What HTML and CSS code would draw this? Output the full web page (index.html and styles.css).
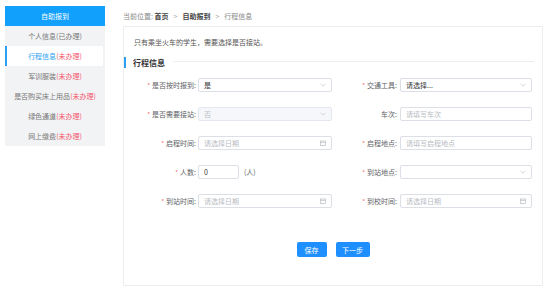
FILE: index.html
```html
<!DOCTYPE html>
<html lang="zh-CN">
<head>
    <meta charset="UTF-8">
    <meta name="viewport" content="width=device-width, initial-scale=1.0">
    <title>行程信息</title>
    <link rel="stylesheet" href="styles.css">
</head>
<body>
    <div class="layout">
        <div class="sidebar">
            <div class="sidebar-title">自助报到</div>
            <div class="menu-item">个人信息(已办理)</div>
            <div class="menu-item active">行程信息<span class="todo">(未办理)</span></div>
            <div class="menu-item">军训服装<span class="todo">(未办理)</span></div>
            <div class="menu-item">是否购买床上用品<span class="todo">(未办理)</span></div>
            <div class="menu-item">绿色通道<span class="todo">(未办理)</span></div>
            <div class="menu-item">网上缴费<span class="todo">(未办理)</span></div>
        </div>

        <div class="main">
            <div class="breadcrumb">
                当前位置: <b>首页</b><span class="sep">&gt;</span><b>自助报到</b><span class="sep">&gt;</span>行程信息
            </div>

            <div class="panel">
                <div class="notice">只有乘坐火车的学生，需要选择是否接站。</div>

                <div class="section-title">
                    <span>行程信息</span>
                    <div class="section-line"></div>
                </div>

                <div class="form-grid">
                    <div class="field">
                        <label class="label"><i>*</i>是否按时报到:</label>
                        <div class="control">
                            <span class="value">是</span>
                            <svg class="icon" viewBox="0 0 10 10"><path d="M2 3.5 L5 6.5 L8 3.5" fill="none" stroke="#c0c4cc" stroke-width="0.9"/></svg>
                        </div>
                    </div>
                    <div class="field right">
                        <label class="label"><i>*</i>交通工具:</label>
                        <div class="control">
                            <span class="value">请选择...</span>
                            <svg class="icon" viewBox="0 0 10 10"><path d="M2 3.5 L5 6.5 L8 3.5" fill="none" stroke="#c0c4cc" stroke-width="0.9"/></svg>
                        </div>
                    </div>

                    <div class="field">
                        <label class="label"><i>*</i>是否需要接站:</label>
                        <div class="control disabled">
                            <span class="placeholder">否</span>
                            <svg class="icon" viewBox="0 0 10 10"><path d="M2 3.5 L5 6.5 L8 3.5" fill="none" stroke="#c0c4cc" stroke-width="0.9"/></svg>
                        </div>
                    </div>
                    <div class="field right">
                        <label class="label">车次:</label>
                        <div class="control">
                            <span class="placeholder">请填写车次</span>
                        </div>
                    </div>

                    <div class="field">
                        <label class="label"><i>*</i>启程时间:</label>
                        <div class="control">
                            <span class="placeholder">请选择日期</span>
                            <svg class="icon" viewBox="0 0 10 10"><rect x="2" y="2.5" width="6" height="5.5" fill="none" stroke="#b0b4bc" stroke-width="0.8"/><path d="M2 4.2 H8" stroke="#b0b4bc" stroke-width="0.8"/></svg>
                        </div>
                    </div>
                    <div class="field right">
                        <label class="label"><i>*</i>启程地点:</label>
                        <div class="control">
                            <span class="placeholder">请填写启程地点</span>
                        </div>
                    </div>

                    <div class="field">
                        <label class="label"><i>*</i>人数:</label>
                        <div class="control small">
                            <span class="value">0</span>
                        </div>
                        <span class="unit">(人)</span>
                    </div>
                    <div class="field right">
                        <label class="label"><i>*</i>到站地点:</label>
                        <div class="control">
                            <span class="placeholder"></span>
                            <svg class="icon" viewBox="0 0 10 10"><path d="M2 3.5 L5 6.5 L8 3.5" fill="none" stroke="#c0c4cc" stroke-width="0.9"/></svg>
                        </div>
                    </div>

                    <div class="field">
                        <label class="label"><i>*</i>到站时间:</label>
                        <div class="control">
                            <span class="placeholder">请选择日期</span>
                            <svg class="icon" viewBox="0 0 10 10"><rect x="2" y="2.5" width="6" height="5.5" fill="none" stroke="#b0b4bc" stroke-width="0.8"/><path d="M2 4.2 H8" stroke="#b0b4bc" stroke-width="0.8"/></svg>
                        </div>
                    </div>
                    <div class="field right">
                        <label class="label"><i>*</i>到校时间:</label>
                        <div class="control">
                            <span class="placeholder">请选择日期</span>
                            <svg class="icon" viewBox="0 0 10 10"><rect x="2" y="2.5" width="6" height="5.5" fill="none" stroke="#b0b4bc" stroke-width="0.8"/><path d="M2 4.2 H8" stroke="#b0b4bc" stroke-width="0.8"/></svg>
                        </div>
                    </div>
                </div>

                <div class="actions">
                    <button class="btn save">保存</button>
                    <button class="btn next">下一步</button>
                </div>
            </div>
        </div>
    </div>
</body>
</html>
```

FILE: styles.css
```css
body {
    margin: 0;
    font-family: "Noto Sans CJK SC", "Noto Sans", sans-serif;
    font-size: 7px;
    color: #606266;
    background-color: #fff;
}

.layout {
    display: flex;
    padding: 6px 10px 0 5px;
}

.sidebar {
    width: 100px;
    flex-shrink: 0;
    background-color: #f2f3f5;
    align-self: flex-start;
}

.sidebar-title {
    height: 20px;
    line-height: 20px;
    text-align: center;
    background-color: #11a0fc;
    color: #fff;
}

.menu-item {
    height: 20px;
    line-height: 20px;
    text-align: center;
    color: #777;
    border-left: 2px solid transparent;
    margin-right: 2px;
}

.menu-item.active {
    background-color: #fff;
    border-left-color: #2b9ff0;
    color: #2b9ff0;
}

.todo {
    color: #f5566c;
}

.main {
    margin-left: 18px;
    width: 420px;
}

.breadcrumb {
    height: 20px;
    line-height: 20px;
    color: #888;
}

.breadcrumb b {
    color: #444;
    font-weight: bold;
}

.breadcrumb .sep {
    margin: 0 5px;
    color: #aaa;
}

.panel {
    border: 1px solid #ededed;
    height: 258px;
}

.notice {
    padding: 9px 0 0 10px;
    height: 12px;
    line-height: 12px;
    color: #555;
}

.section-title {
    display: flex;
    align-items: center;
    margin-top: 9px;
    height: 11px;
    border-left: 2px solid #2b9ff0;
    padding-left: 7px;
    padding-right: 8px;
    font-size: 8px;
    font-weight: bold;
    color: #333;
}

.section-line {
    flex: 1;
    height: 1px;
    background-color: #eeeeee;
    margin-left: 8px;
    margin-top: -2px;
}

.form-grid {
    display: grid;
    grid-template-columns: 212px 208px;
    grid-auto-rows: 29px;
    margin-top: 2px;
    align-items: center;
}

.field {
    display: flex;
    align-items: center;
}

.label {
    width: 74px;
    padding-right: 2px;
    text-align: right;
    box-sizing: border-box;
    white-space: nowrap;
}

.right .label {
    width: 64px;
    padding-right: 3px;
}

.label i {
    font-style: normal;
    color: #f56c6c;
    margin-right: 2px;
    font-size: 6px;
}

.control {
    position: relative;
    width: 134px;
    height: 14px;
    box-sizing: border-box;
    border: 1px solid #dcdfe6;
    border-radius: 2px;
    background-color: #fff;
    display: flex;
    align-items: center;
    padding-left: 5px;
}

.right .control {
    width: 132px;
}

.control.disabled {
    background-color: #f5f7fa;
    border-color: #e4e7ed;
}

.control.small {
    width: 41px;
}

.value {
    color: #333;
}

.placeholder {
    color: #b8bcc4;
}

.icon {
    position: absolute;
    right: 4px;
    top: 2px;
    width: 8px;
    height: 8px;
}

.unit {
    margin-left: 5px;
    color: #666;
}

.actions {
    display: flex;
    justify-content: center;
    gap: 9px;
    margin-top: 27px;
}

.btn {
    height: 15px;
    border: none;
    border-radius: 2px;
    background-color: #1f8fff;
    color: #fff;
    font-family: inherit;
    font-size: 7px;
    padding: 0;
}

.btn.save {
    width: 30px;
}

.btn.next {
    width: 34px;
}
```
